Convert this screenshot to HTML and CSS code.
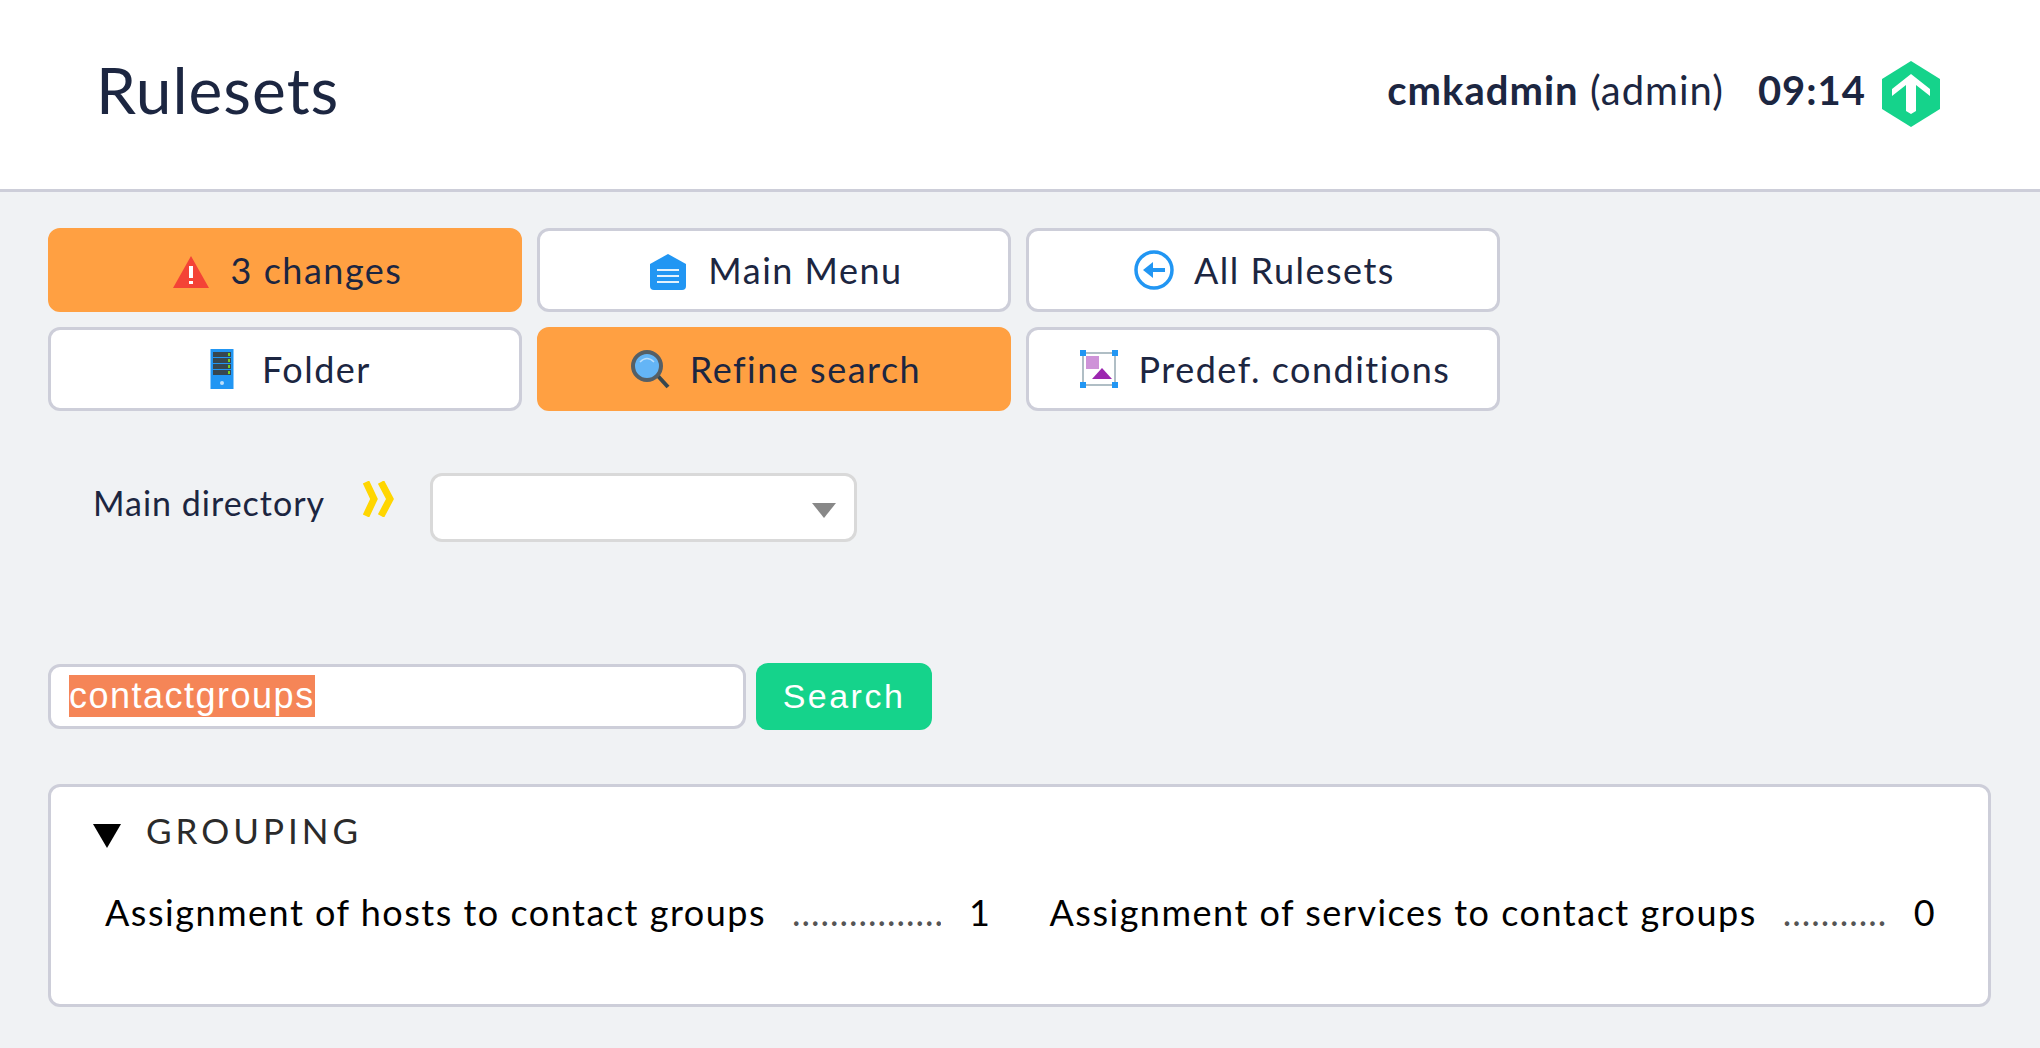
FILE: index.html
```html
<!DOCTYPE html>
<html lang="en">
<head>
  <meta charset="UTF-8">
  <meta name="viewport" content="width=device-width, initial-scale=1.0">
  <title>Rulesets</title>
  <link rel="stylesheet" href="styles.css">
</head>
<body>
  <header class="top">
    <h1 class="title">Rulesets</h1>
    <div class="status">
      <span class="user"><b>cmkadmin</b> (admin)</span>
      <b class="clock">09:14</b>
      <svg class="logo" viewBox="0 0 58 66">
        <path fill="#15d38b" d="M29 0 58 18V48L29 66 0 48V18Z"/>
        <path fill="#fff" d="M29 13 48 28V35L34 24V50L29 53 24 50V24L10 35V28Z"/>
      </svg>
    </div>
  </header>

  <main class="content">
    <nav class="buttons">
      <a class="btn btn-hot">
        <svg class="icon" viewBox="0 0 40 40">
          <path fill="#f44336" d="M20 6 38 38H2Z"/>
          <rect fill="#fff" x="18" y="16" width="4" height="12"/>
          <rect fill="#fff" x="18" y="31" width="4" height="3"/>
        </svg>
        3 changes
      </a>
      <a class="btn">
        <svg class="icon" viewBox="0 0 40 40">
          <path fill="#2196f3" d="M20 4 38 14V36Q38 40 34 40H6Q2 40 2 36V14Z"/>
          <path fill="#e3f2fd" d="M9 19H31V21H9ZM9 25H31V27H9ZM9 31H31V33H9Z"/>
        </svg>
        Main Menu
      </a>
      <a class="btn">
        <svg class="icon" viewBox="0 0 40 40">
          <circle cx="20" cy="20" r="18" fill="none" stroke="#2196f3" stroke-width="3.5"/>
          <path fill="#2196f3" d="M9 20 19 12V18H31V22H19V28Z"/>
        </svg>
        All Rulesets
      </a>
      <a class="btn">
        <svg class="icon" viewBox="0 0 40 40">
          <rect fill="#2196f3" x="8.5" width="23" height="40"/>
          <path fill="#37474f" d="M11 3H29V8H11ZM11 9H29V14H11ZM11 15H29V20H11ZM11 21H29V26H11Z"/>
          <path fill="#76d21f" d="M26 4H28V7H26ZM26 10H28V13H26ZM26 16H28V19H26ZM26 22H28V25H26Z"/>
          <circle cx="20" cy="34" r="2" fill="#bbdefb"/>
        </svg>
        Folder
      </a>
      <a class="btn btn-hot">
        <svg class="icon" viewBox="0 0 40 40">
          <path stroke="#37474f" stroke-width="4" d="M27 26 38 38"/>
          <circle cx="17" cy="17" r="14" fill="#64b5f6" stroke="#555f66" stroke-width="4"/>
          <path fill="none" stroke="#bbdefb" stroke-width="1.5" d="M10 13Q17 6 24 13"/>
        </svg>
        Refine search
      </a>
      <a class="btn">
        <svg class="icon" viewBox="0 0 40 40">
          <rect x="4" y="4" width="32" height="32" fill="none" stroke="#b0bec5" stroke-width="2"/>
          <rect fill="#ce93d8" x="7" y="7" width="13" height="13"/>
          <path fill="#9c27b0" d="M23 19 33 30H13Z"/>
          <path fill="#2196f3" d="M1 1H7V7H1ZM33 1H39V7H33ZM1 33H7V39H1ZM33 33H39V39H33Z"/>
        </svg>
        Predef. conditions
      </a>
    </nav>

    <div class="crumb">
      <span class="crumb-label">Main directory</span>
      <svg class="chevrons" viewBox="0 0 33 36">
        <path fill="none" stroke="#ffd600" stroke-width="7" d="M4 1 12 18 4 35M19 1 28 18 19 35"/>
      </svg>
      <div class="select"><i class="caret"></i></div>
    </div>

    <form class="search">
      <div class="search-input"><span class="selected">contactgroups</span></div>
      <a class="search-btn">Search</a>
    </form>

    <section class="box">
      <h2 class="box-title"><i class="fold"></i>GROUPING</h2>
      <div class="rules">
        <div class="rule">
          <a class="rule-name">Assignment of hosts to contact groups</a>
          <span class="leader leader-long">.................</span>
          <span class="count">1</span>
        </div>
        <div class="rule">
          <a class="rule-name">Assignment of services to contact groups</a>
          <span class="leader leader-short">...........</span>
          <span class="count">0</span>
        </div>
      </div>
    </section>
  </main>
</body>
</html>
```

FILE: styles.css
```css
body {
  margin: 0;
  height: 1048px;
  overflow: hidden;
  background-color: #f0f2f4;
  color: #1e262e;
  font-family: Lato, sans-serif;
}

.top {
  height: 189px;
  display: flex;
  justify-content: space-between;
  align-items: center;
  background-color: #fff;
  border-bottom: 3px solid #cdced9;
  color: #1c2641;
}

.title {
  margin: -10px 0 0 96px;
  font-size: 64px;
  font-weight: 400;
  letter-spacing: 1px;
}

.status {
  display: flex;
  align-items: center;
  margin: -9px 100px 0 0;
  font-size: 40px;
  letter-spacing: 1px;
}

.clock {
  margin-left: 34px;
}

.logo {
  width: 58px;
  height: 66px;
  margin: 8px 0 0 16px;
}

.content {
  padding: 36px 49px 0 48px;
}

.buttons {
  display: grid;
  grid-template-columns: repeat(3, 474px);
  grid-auto-rows: 84px;
  gap: 15px 15px;
}

.btn {
  display: flex;
  justify-content: center;
  align-items: center;
  box-sizing: border-box;
  padding-left: 3px;
  background-color: #fff;
  border: 3px solid #cdced9;
  border-radius: 12px;
  color: #1c2641;
  font-size: 36px;
  letter-spacing: 1.5px;
}

.btn-hot {
  background-color: #ffa042;
  border-color: #ffa042;
}

.icon {
  width: 40px;
  height: 40px;
  margin-right: 20px;
}

.crumb {
  display: flex;
  align-items: center;
  margin: 62px 0 0 45px;
  color: #1c2641;
  font-size: 34px;
  letter-spacing: 1px;
}

.crumb-label {
  width: 269px;
  margin-top: -10px;
}

.chevrons {
  width: 33px;
  height: 36px;
  margin: -18px 35px 0 0;
}

.select {
  box-sizing: border-box;
  width: 427px;
  height: 69px;
  display: flex;
  justify-content: flex-end;
  align-items: center;
  padding: 6px 18px 0 0;
  background-color: #fff;
  border: 3px solid #d9d9d9;
  border-radius: 12px;
}

.caret {
  border-top: 15px solid #888;
  border-left: 12px solid transparent;
  border-right: 12px solid transparent;
}

.search {
  display: flex;
  align-items: center;
  gap: 10px;
  margin-top: 121px;
}

.search-input {
  box-sizing: border-box;
  width: 698px;
  height: 65px;
  display: flex;
  align-items: center;
  padding-left: 18px;
  background-color: #fff;
  border: 3px solid #cdced9;
  border-radius: 12px;
  font-family: "Liberation Sans", sans-serif;
  font-size: 36px;
  letter-spacing: 1.5px;
}

.selected {
  background-color: #f58557;
  color: #fff;
  margin-top: -2px;
}

.search-btn {
  width: 176px;
  height: 67px;
  display: flex;
  justify-content: center;
  align-items: center;
  background-color: #15d38b;
  border-radius: 12px;
  color: #fff;
  font-family: "Liberation Sans", sans-serif;
  font-size: 34px;
  letter-spacing: 2.5px;
}

.box {
  box-sizing: border-box;
  height: 223px;
  margin-top: 54px;
  padding: 22px 54px 0 42px;
  background-color: #fff;
  border: 3px solid #cdced9;
  border-radius: 12px;
}

.box-title {
  display: flex;
  align-items: center;
  margin: 0;
  color: #2b2b2b;
  font-size: 35px;
  font-weight: 400;
  letter-spacing: 4px;
}

.fold {
  margin: 11px 25px 0 0;
  border-top: 24px solid #000;
  border-left: 14px solid transparent;
  border-right: 14px solid transparent;
}

.rules {
  display: flex;
  gap: 58px;
  margin: 39px 0 0 12px;
  color: #000;
  font-size: 36px;
  letter-spacing: 1.5px;
}

.rule {
  display: flex;
  white-space: nowrap;
}

.leader {
  overflow: hidden;
  margin: 0 28px 0 26px;
  color: #555;
  letter-spacing: 1px;
}

.leader-long {
  width: 149px;
}

.leader-short {
  width: 103px;
}
```
